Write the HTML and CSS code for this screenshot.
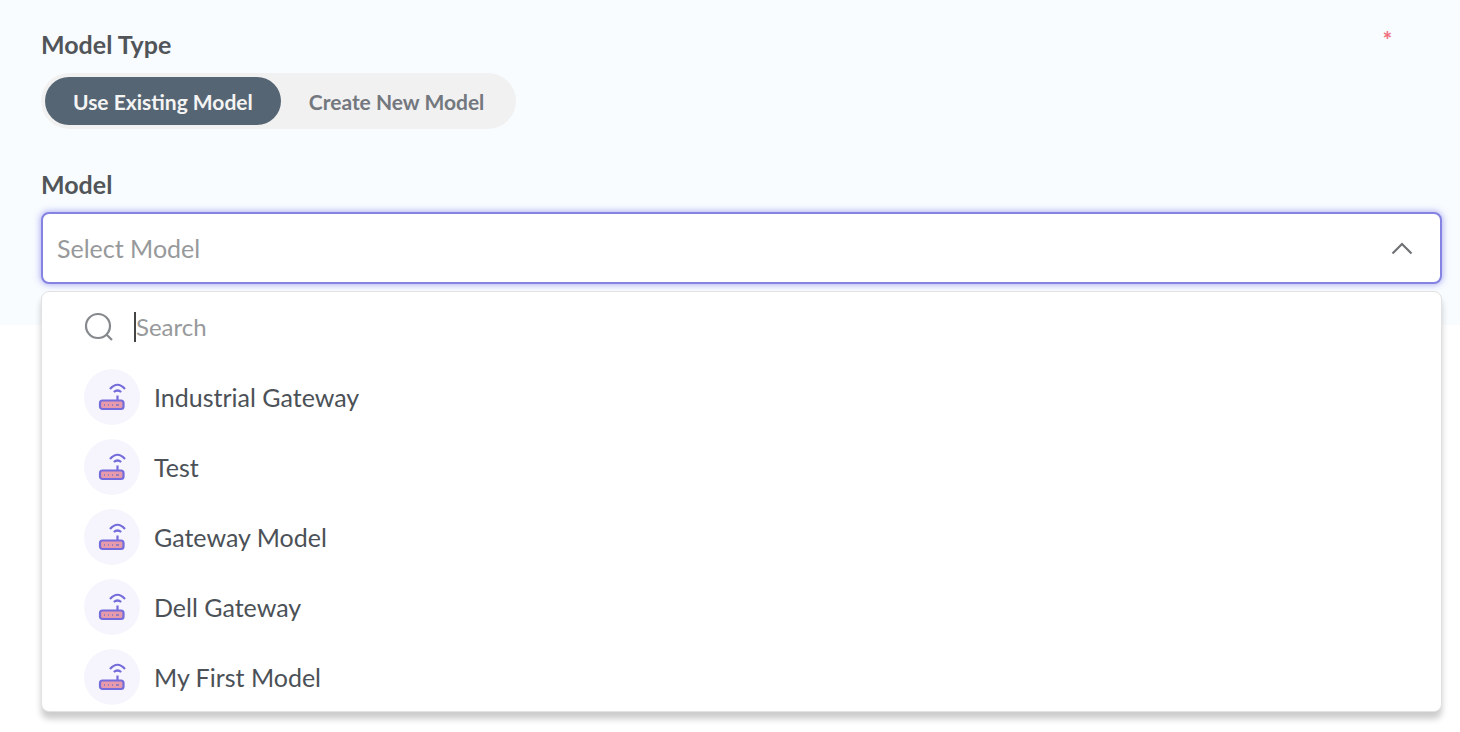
FILE: index.html
```html
<!DOCTYPE html>
<html lang="en">
<head>
  <meta charset="UTF-8" />
  <meta name="viewport" content="width=device-width, initial-scale=1.0"/>
  <title>Model</title>
  <link rel="stylesheet" href="styles.css">
</head>
<body>

  <!-- Router icon shared by every option -->
  <svg class="sprite" aria-hidden="true">
    <symbol id="router" viewBox="0 0 28 28">
      <rect x="2" y="17.500" width="23.500" height="8.500" rx="2.5" fill="#e79aab" stroke="#746cda" stroke-width="2.200"/>
      <path d="M19.500 12.500v5" fill="none" stroke="#746cda" stroke-width="2.200"/>
      <path d="M12 6Q19.500-2.500 27 6M15.800 9Q19.500 6 23.200 9" fill="none" stroke="#746cda" stroke-width="2.200"/>
      <path d="M6 22h1M10 22h1M14 22h1M18 22h3" fill="none" stroke="#7b74c4" stroke-width="1.500"/>
    </symbol>
  </svg>

  <form class="model-form">
    <div class="form-header">
      <h2 class="label" id="type-label">Model Type</h2>
      <span class="required">*</span>
    </div>
    <div class="toggle" role="group" aria-labelledby="type-label">
      <button type="button" class="toggle-btn active">Use Existing Model</button>
      <button type="button" class="toggle-btn">Create New Model</button>
    </div>

    <label class="label" for="model">Model</label>
    <div class="dropdown">
      <select class="select" id="model">
        <option value="">Select Model</option>
      </select>
      <svg class="chevron" viewBox="0 0 24 24" fill="none" stroke="#6f7275" stroke-width="2.200"><path d="M2.500 17.500L12 8L21.500 17.500"/></svg>

      <div class="menu">
        <div class="search-row">
          <svg class="search-icon" viewBox="0 0 30 30" fill="none" stroke="#85888c" stroke-width="2.200"><circle cx="14" cy="14" r="12"/><path d="M22.500 22.500L28 28"/></svg>
          <input type="text" class="search" id="search" placeholder="Search" aria-label="Search" />
        </div>
        <button type="button" class="option"><span class="avatar"><svg class="router"><use href="#router"/></svg></span>Industrial Gateway</button>
        <button type="button" class="option"><span class="avatar"><svg class="router"><use href="#router"/></svg></span>Test</button>
        <button type="button" class="option"><span class="avatar"><svg class="router"><use href="#router"/></svg></span>Gateway Model</button>
        <button type="button" class="option"><span class="avatar"><svg class="router"><use href="#router"/></svg></span>Dell Gateway</button>
        <button type="button" class="option"><span class="avatar"><svg class="router"><use href="#router"/></svg></span>My First Model</button>
      </div>
    </div>
  </form>

</body>
</html>
```
FILE: styles.css
```css
* {
  box-sizing: border-box;
}
body {
  margin: 0;
  min-height: 100vh;
  font-family: Lato, sans-serif;
  font-size: 25px;
  color: #4b5157;
  background-color: #fff;
}
button, input, select {
  font: inherit;
  color: inherit;
}
.sprite {
  display: none;
}
.model-form {
  padding: 29px 18px 41px 41px;
  background-color: #f8fcff;
}
.form-header {
  display: flex;
  justify-content: space-between;
  padding-right: 50px;
}
.label {
  display: block;
  margin: 0;
  font-size: 25px;
  font-weight: 700;
  line-height: 30px;
  color: #515559;
}
.required {
  font-size: 22px;
  font-weight: 900;
  line-height: 22px;
  color: #f0737f;
}
.toggle {
  display: inline-flex;
  margin: 14px 0 40px;
  padding: 4px;
  border-radius: 28px;
  background-color: #f1f1f1;
}
.toggle-btn {
  height: 48px;
  padding: 0 28px;
  border: none;
  border-radius: 24px;
  background: none;
  font-size: 21px;
  font-weight: 700;
  color: #73777e;
  cursor: pointer;
}
.toggle-btn.active {
  background-color: #566573;
  color: #f4f4f4;
}
.dropdown {
  position: relative;
  margin-top: 13px;
}
.select {
  display: block;
  width: 100%;
  height: 72px;
  padding: 0 14px;
  appearance: none;
  border: 2px solid #8583e2;
  border-radius: 8px;
  background-color: #fff;
  box-shadow: 0 0 6px 1px rgba(110, 105, 230, 0.5);
  color: #97999b;
}
.chevron {
  position: absolute;
  top: 24px;
  right: 28px;
  width: 24px;
  height: 24px;
  pointer-events: none;
}
.menu {
  position: absolute;
  top: calc(100% + 7px);
  left: 0;
  right: 0;
  display: flex;
  flex-direction: column;
  gap: 2px;
  border: 1px solid #e2e2e2;
  border-radius: 8px;
  background-color: #fff;
  box-shadow: 0 7px 6px 0 rgba(0, 0, 0, 0.2);
}
.search-row {
  display: flex;
  align-items: center;
  gap: 20px;
  height: 69px;
  padding: 0 42px;
}
.search-icon {
  width: 30px;
  height: 30px;
}
.search {
  flex: 1;
  height: 30px;
  padding: 0;
  border: none;
  border-left: 2px solid #444;
  outline: none;
  background: none;
  font-size: 24px;
}
.search::placeholder {
  color: #97999b;
}
.option {
  display: flex;
  align-items: center;
  gap: 14px;
  width: 100%;
  height: 68px;
  padding: 0 42px;
  border: none;
  background: none;
  text-align: left;
  cursor: pointer;
}
.avatar {
  display: flex;
  align-items: center;
  justify-content: center;
  width: 56px;
  height: 56px;
  border-radius: 50%;
  background-color: #f6f5fd;
}
.router {
  width: 28px;
  height: 28px;
}
```
